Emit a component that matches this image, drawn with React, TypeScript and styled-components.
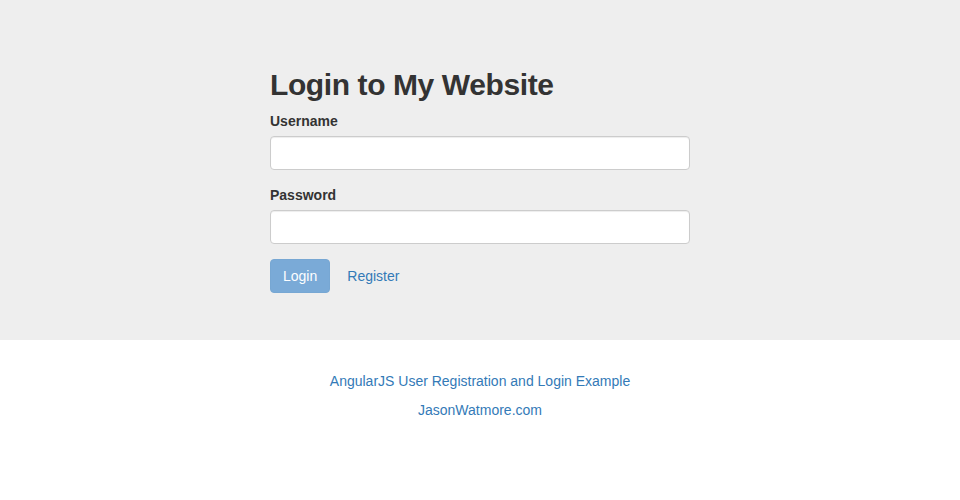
import React from "react";
import styled, { createGlobalStyle } from "styled-components";

const Global = createGlobalStyle`
  * { box-sizing: border-box; }
  html, body { margin: 0; padding: 0; background: #fff; }
  body {
    font-family: "Liberation Sans", Arial, Helvetica, sans-serif;
    font-size: 14px;
    line-height: 1.428571;
    color: #333;
  }
`;

const Jumbotron = styled.div`
  background: #eee;
  padding: 48px 0 47px;
`;

const Panel = styled.div`
  width: 420px;
  margin: 0 auto;
`;

const Title = styled.h2`
  margin: 20px 0 10px;
  font-size: 30px;
  font-weight: 700;
  letter-spacing: -0.4px;
  line-height: 1.1;
  color: #333;
`;

const FormGroup = styled.div`
  margin-bottom: 15px;
`;

const Label = styled.label`
  display: inline-block;
  padding-top: 1px;
  margin-bottom: 4px;
  font-weight: bold;
`;

const Input = styled.input`
  display: block;
  width: 100%;
  height: 34px;
  padding: 6px 12px;
  font-family: inherit;
  font-size: 14px;
  color: #555;
  background: #fff;
  border: 1px solid #ccc;
  border-radius: 4px;
  box-shadow: inset 0 1px 1px rgba(0, 0, 0, 0.075);
  outline: none;
`;

const Actions = styled.div`
  display: flex;
  align-items: center;
  gap: 4px;
`;

const Button = styled.button<{ $link?: boolean }>`
  display: inline-block;
  padding: 7px 12px 5px;
  font-family: inherit;
  font-size: 14px;
  font-weight: 400;
  line-height: 1.428571;
  border-radius: 4px;
  border: 1px solid ${(p) => (p.$link ? "transparent" : "#77a7d3")};
  background: ${(p) => (p.$link ? "transparent" : "#7aaad7")};
  color: ${(p) => (p.$link ? "#337ab7" : "#fdfeff")};
  cursor: pointer;
`;

const Footer = styled.div`
  padding-top: 32px;
  text-align: center;
`;

const FooterLine = styled.p`
  margin: 0 0 9px;
`;

const Link = styled.a`
  color: #337ab7;
  text-decoration: none;
`;

export default function App() {
  return (
    <>
      <Global />
      <Jumbotron>
        <Panel>
          <Title>Login to My Website</Title>
          <FormGroup>
            <Label htmlFor="username">Username</Label>
            <Input id="username" type="text" />
          </FormGroup>
          <FormGroup>
            <Label htmlFor="password">Password</Label>
            <Input id="password" type="password" />
          </FormGroup>
          <Actions>
            <Button disabled>Login</Button>
            <Button $link>Register</Button>
          </Actions>
        </Panel>
      </Jumbotron>
      <Footer>
        <FooterLine>
          <Link href="#">AngularJS User Registration and Login Example</Link>
        </FooterLine>
        <FooterLine>
          <Link href="#">JasonWatmore.com</Link>
        </FooterLine>
      </Footer>
    </>
  );
}
